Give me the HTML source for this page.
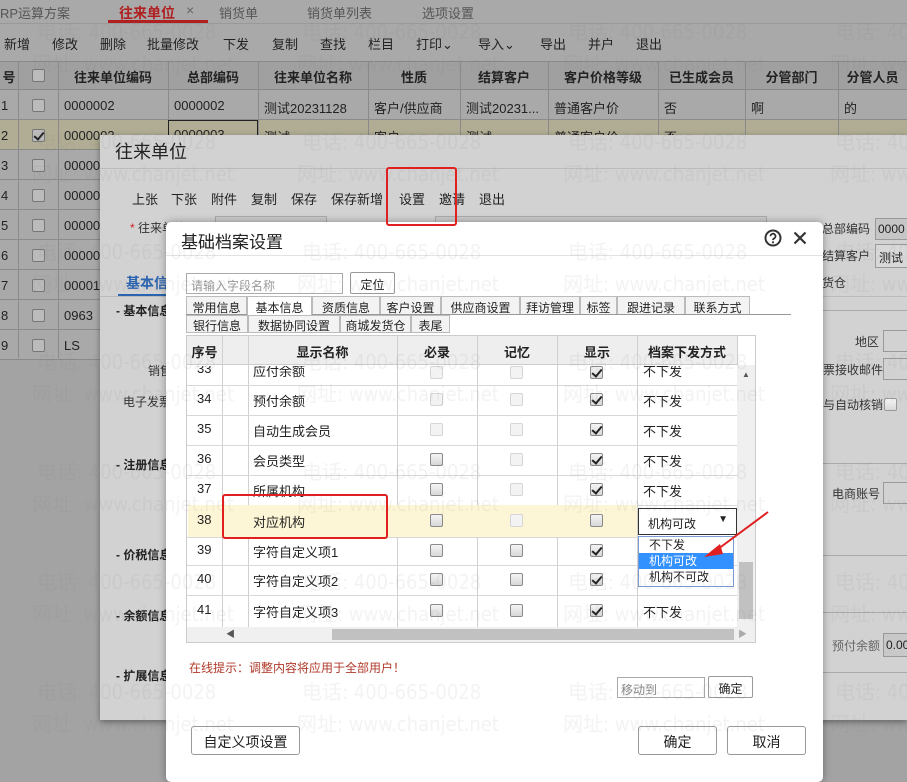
<!DOCTYPE html>
<html><head><meta charset="utf-8">
<style>
*{margin:0;padding:0;box-sizing:border-box}
body{width:907px;height:771px;overflow:hidden;position:relative;background:#a3a3a3;font-family:"Liberation Sans","Noto Sans CJK SC",sans-serif;font-size:13px;color:#222}
.a{position:absolute;white-space:nowrap}
.cb{position:absolute;width:13px;height:13px;border:1px solid #8a8a8a;border-radius:2px;background:linear-gradient(#f4f4f4,#d8d8d8)}
.cb.f{border-color:#d6d6d6;background:#f3f3f3}
.cb.k::after{content:"";position:absolute;left:3px;top:0px;width:4px;height:8px;border:solid #222;border-width:0 2px 2px 0;transform:rotate(40deg)}
.wm{position:absolute;font-size:20px;color:rgba(120,120,120,0.09);white-space:nowrap;pointer-events:none;z-index:50;font-family:"DejaVu Sans Condensed","Liberation Sans","Noto Sans CJK SC",sans-serif}
</style></head><body>

<div class="a" style="left:0;top:0;width:907px;height:360px;background:#a9a9a9"></div>
<div class="a" style="left:0;top:3px;font-size:13px;color:#555">RP运算方案</div>
<div class="a" style="left:119px;top:3px;font-size:14px;color:#b02020;font-weight:bold">往来单位</div>
<div class="a" style="left:186px;top:2px;font-size:14px;color:#666">×</div>
<div class="a" style="left:108px;top:20px;width:100px;height:3px;background:#b02020"></div>
<div class="a" style="left:219px;top:3px;color:#555">销货单</div>
<div class="a" style="left:307px;top:3px;color:#555">销货单列表</div>
<div class="a" style="left:422px;top:3px;color:#555">选项设置</div>
<div class="a" style="left:0;top:23px;width:907px;height:1px;background:#999"></div>
<div class="a" style="left:4px;top:34px">新增</div>
<div class="a" style="left:52px;top:34px">修改</div>
<div class="a" style="left:100px;top:34px">删除</div>
<div class="a" style="left:147px;top:34px">批量修改</div>
<div class="a" style="left:223px;top:34px">下发</div>
<div class="a" style="left:272px;top:34px">复制</div>
<div class="a" style="left:320px;top:34px">查找</div>
<div class="a" style="left:368px;top:34px">栏目</div>
<div class="a" style="left:416px;top:34px">打印⌄</div>
<div class="a" style="left:478px;top:34px">导入⌄</div>
<div class="a" style="left:540px;top:34px">导出</div>
<div class="a" style="left:588px;top:34px">并户</div>
<div class="a" style="left:636px;top:34px">退出</div>
<div class="a" style="left:0;top:61px;width:907px;height:29px;background:#a0a0a0;border-top:1px solid #888;border-bottom:1px solid #888"></div>
<div class="a" style="left:0;top:120px;width:907px;height:30px;background:#b1ad94"></div>
<div id="grid"></div>

<div class="a" style="left:100px;top:135px;width:807px;height:585px;background:#d2d2d2;box-shadow:0 2px 6px rgba(0,0,0,.4)"></div>
<div class="a" style="left:115px;top:138px;font-size:18px;color:#222">往来单位</div>
<div class="a" style="left:100px;top:168px;width:807px;height:1px;background:#bbb"></div>
<div class="a" style="left:132px;top:189px">上张</div>
<div class="a" style="left:171px;top:189px">下张</div>
<div class="a" style="left:211px;top:189px">附件</div>
<div class="a" style="left:251px;top:189px">复制</div>
<div class="a" style="left:291px;top:189px">保存</div>
<div class="a" style="left:331px;top:189px">保存新增</div>
<div class="a" style="left:399px;top:189px">设置</div>
<div class="a" style="left:439px;top:189px">邀请</div>
<div class="a" style="left:479px;top:189px">退出</div>
<div class="a" style="left:386px;top:167px;width:71px;height:59px;border:2px solid #e02020;border-radius:3px;z-index:60"></div>
<div class="a" style="left:130px;top:219px;font-size:12px;color:#333"><span style="color:#c22">*</span> 往来单位编码</div>
<div class="a" style="left:215px;top:216px;width:112px;height:20px;border:1px solid #aaa;background:#ccc"></div>
<div class="a" style="left:435px;top:216px;width:332px;height:20px;border:1px solid #aaa;background:#ccc"></div>
<div class="a" style="left:822px;top:220px;font-size:12px;color:#333">总部编码</div>
<div class="a" style="left:875px;top:218px;width:40px;height:22px;border:1px solid #999;background:#c6c6c6;padding:3px 2px;font-size:12px">0000</div>
<div class="a" style="left:822px;top:247px;font-size:12px;color:#333">结算客户</div>
<div class="a" style="left:875px;top:244px;width:40px;height:24px;border:1px solid #999;background:#d8d8d8;padding:4px 3px;font-size:12px">测试</div>
<div class="a" style="left:822px;top:274px;font-size:12px;color:#333">货仓</div>
<div class="a" style="left:126px;top:273px;font-size:14px;color:#2a63b0;font-weight:bold">基本信息</div>
<div class="a" style="left:118px;top:294px;width:60px;height:3px;background:#2a63b0"></div>
<div class="a" style="left:100px;top:296px;width:807px;height:1px;background:#bbb"></div>
<div class="a" style="left:116px;top:302px;font-size:12px;font-weight:bold">- 基本信息</div>
<div class="a" style="left:148px;top:362px;font-size:12px;color:#333">销售</div>
<div class="a" style="left:123px;top:393px;font-size:12px;color:#333">电子发票</div>
<div class="a" style="left:116px;top:456px;font-size:12px;font-weight:bold">- 注册信息</div>
<div class="a" style="left:116px;top:546px;font-size:12px;font-weight:bold">- 价税信息</div>
<div class="a" style="left:116px;top:607px;font-size:12px;font-weight:bold">- 余额信息</div>
<div class="a" style="left:116px;top:667px;font-size:12px;font-weight:bold">- 扩展信息</div>
<div class="a" style="left:823px;top:310px;width:84px;height:1px;background:#aaa"></div>
<div class="a" style="left:855px;top:333px;font-size:12px;color:#333">地区</div>
<div class="a" style="left:883px;top:330px;width:30px;height:22px;border:1px solid #999"></div>
<div class="a" style="left:823px;top:361px;font-size:12px;color:#333">票接收邮件</div>
<div class="a" style="left:883px;top:358px;width:30px;height:22px;border:1px solid #999"></div>
<div class="a" style="left:823px;top:396px;font-size:12px;color:#333">与自动核销</div>
<div class="cb" style="left:884px;top:398px;border-color:#999"></div>
<div class="a" style="left:823px;top:463px;width:84px;height:1px;background:#aaa"></div>
<div class="a" style="left:832px;top:485px;font-size:12px;color:#333">电商账号</div>
<div class="a" style="left:883px;top:482px;width:30px;height:22px;border:1px solid #999"></div>
<div class="a" style="left:823px;top:555px;width:84px;height:1px;background:#aaa"></div>
<div class="a" style="left:823px;top:612px;width:84px;height:1px;background:#aaa"></div>
<div class="a" style="left:832px;top:637px;font-size:12px;color:#666">预付余额</div>
<div class="a" style="left:883px;top:633px;width:30px;height:24px;border:1px solid #999;background:#c8c8c8;padding:4px 2px;font-size:12px">0.00</div>
<div class="a" style="left:823px;top:672px;width:84px;height:1px;background:#aaa"></div>

<div class="a" style="left:166px;top:222px;width:657px;height:560px;background:#fff;border-radius:5px;box-shadow:0 0 8px rgba(0,0,0,.35)"></div>
<div class="a" style="left:181px;top:228px;font-size:17px;color:#222">基础档案设置</div>
<svg class="a" style="left:764px;top:229px" width="18" height="18" viewBox="0 0 18 18"><circle cx="9" cy="9" r="7.5" fill="none" stroke="#333" stroke-width="2"/><path d="M6.5 7.2a2.5 2.5 0 1 1 3.5 2.3c-.8.4-1 .8-1 1.6" fill="none" stroke="#333" stroke-width="1.8"/><circle cx="9" cy="13.3" r="1.1" fill="#333"/></svg>
<svg class="a" style="left:793px;top:231px" width="14" height="14" viewBox="0 0 14 14"><path d="M1.5 1.5L12.5 12.5M12.5 1.5L1.5 12.5" stroke="#333" stroke-width="2.2"/></svg>
<div class="a" style="left:166px;top:255px;width:657px;height:1px;background:#e2e2e2"></div>
<div class="a" style="left:186px;top:273px;width:157px;height:21px;border:1px solid #aaa;font-size:12px;color:#999;padding:3px 4px">请输入字段名称</div>
<div class="a" style="left:350px;top:272px;width:45px;height:22px;border:1px solid #999;border-radius:2px;font-size:12px;padding:3px 0;text-align:center">定位</div>
<div id="tabs"></div>
<div class="a" style="left:186px;top:314px;width:605px;height:1px;background:#999"></div>

<div class="a" style="left:186px;top:335px;width:570px;height:308px;border:1px solid #ccc;background:#fff"></div>
<div class="a" style="left:187px;top:336px;width:550px;height:29px;background:#eee;border-bottom:1px solid #ccc"></div>
<div id="ig"></div>
<div class="a" style="left:737px;top:365px;width:18px;height:262px;background:#f0f0f0"></div>
<div class="a" style="left:742px;top:370px;font-size:8px;color:#555">▲</div>
<div class="a" style="left:742px;top:612px;font-size:8px;color:#aaa">▼</div>
<div class="a" style="left:739px;top:562px;width:14px;height:57px;background:#c1c1c1"></div>
<div class="a" style="left:187px;top:627px;width:568px;height:15px;background:#f0f0f0"></div>
<div class="a" style="left:332px;top:629px;width:402px;height:11px;background:#c1c1c1"></div>
<div class="a" style="left:226px;top:627px;font-size:9px;color:#555">◀</div>
<div class="a" style="left:738px;top:627px;font-size:9px;color:#aaa">▶</div>

<div class="a" style="left:222px;top:494px;width:166px;height:45px;border:2px solid #e02020;border-radius:3px;z-index:60"></div>
<div class="a" style="left:638px;top:508px;width:99px;height:27px;border:1px solid #333;background:#fff;font-size:12px;padding:6px 9px;z-index:40">机构可改<span style="position:absolute;right:8px;top:5px;font-size:10px">▼</span></div>
<div class="a" style="left:638px;top:536px;width:96px;height:51px;border:1px solid #7a9cd3;background:#fff;font-size:12px;z-index:40">
<div style="height:16px;padding:0 10px;line-height:16px">不下发</div>
<div style="height:16px;padding:0 10px;line-height:16px;background:#3390ff;color:#fff">机构可改</div>
<div style="height:16px;padding:0 10px;line-height:16px">机构不可改</div></div>
<svg class="a" style="left:700px;top:508px;z-index:61" width="72" height="56" viewBox="0 0 72 56"><path d="M68 4L14 44" stroke="#e02020" stroke-width="2"/><path d="M4 49L20 36L23 46Z" fill="#e02020"/></svg>

<div class="a" style="left:189px;top:659px;font-size:12px;color:#b03a2a">在线提示：调整内容将应用于全部用户！</div>
<div class="a" style="left:617px;top:677px;width:88px;height:21px;border:1px solid #aaa;font-size:12px;color:#888;padding:3px 3px">移动到</div>
<div class="a" style="left:708px;top:676px;width:45px;height:22px;border:1px solid #999;border-radius:2px;font-size:12px;text-align:center;padding:3px 0">确定</div>
<div class="a" style="left:191px;top:726px;width:109px;height:29px;border:1px solid #999;border-radius:3px;font-size:14px;text-align:center;padding:5px 0">自定义项设置</div>
<div class="a" style="left:638px;top:726px;width:79px;height:29px;border:1px solid #999;border-radius:3px;font-size:14px;text-align:center;padding:5px 0">确定</div>
<div class="a" style="left:727px;top:726px;width:79px;height:29px;border:1px solid #999;border-radius:3px;font-size:14px;text-align:center;padding:5px 0">取消</div>

<div id="wm"></div>
<script>
var cols=[0,18,58,168,258,368,460,548,658,745,838,907];
var hd=["号","","往来单位编码","总部编码","往来单位名称","性质","结算客户","客户价格等级","已生成会员","分管部门","分管人员"];
var g='';
for(var i=1;i<cols.length-1;i++)g+='<div class="a" style="left:'+cols[i]+'px;top:61px;width:1px;height:'+(i<3?297:74)+'px;background:#8a8a8a"></div>';
for(i=0;i<hd.length;i++)g+='<div class="a" style="left:'+cols[i]+'px;top:67px;width:'+(cols[i+1]-cols[i])+'px;text-align:center;font-weight:bold;font-size:13px">'+hd[i]+'</div>';
g+='<div class="cb" style="left:32px;top:69px;border-color:#777;background:#bbb"></div>';
var codes=["0000002","0000003","00000","00000","00000","00000","00001","0963","LS"];
for(var r=0;r<9;r++){var y=90+r*30;
g+='<div class="a" style="left:0;top:'+(y+29)+'px;width:'+(r<2?907:100)+'px;height:1px;background:#8a8a8a"></div>';
g+='<div class="a" style="left:1px;top:'+(y+8)+'px">'+(r+1)+'</div>';
g+='<div class="cb'+(r==1?' k':'')+'" style="left:32px;top:'+(y+9)+'px;border-color:#777;background:#bbb"></div>';
g+='<div class="a" style="left:64px;top:'+(y+8)+'px">'+codes[r]+'</div>';}
var r1=["0000002","测试20231128","客户/供应商","测试20231...","普通客户价","否","啊","的"];
var xs=[174,264,374,466,554,664,751,844];
for(i=0;i<8;i++)g+='<div class="a" style="left:'+xs[i]+'px;top:98px">'+r1[i]+'</div>';
var r2=["0000003","测试","客户","测试","普通客户价","否"];
for(i=0;i<6;i++)g+='<div class="a" style="left:'+xs[i]+'px;top:127px">'+r2[i]+'</div>';
g+='<div class="a" style="left:168px;top:120px;width:90px;height:30px;border:1px solid #222"></div>';
document.getElementById('grid').innerHTML=g;
var t1=[["常用信息",186,247],["基本信息",247,312],["资质信息",312,380],["客户设置",380,441],["供应商设置",441,520],["拜访管理",520,580],["标签",580,617],["跟进记录",617,685],["联系方式",685,750]];
var t2=[["银行信息",186,248],["数据协同设置",248,340],["商城发货仓",340,411],["表尾",411,450]];
var t='';
t1.forEach(function(a){t+='<div class="a" style="left:'+a[1]+'px;top:296px;width:'+(a[2]-a[1])+'px;height:'+(a[0]=="基本信息"?19:18)+'px;border:1px solid #bbb;border-bottom:none;background:'+(a[0]=="基本信息"?'#fff':'#f3f3f3')+';font-size:12px;text-align:center;padding-top:2px;z-index:2">'+a[0]+'</div>'});
t2.forEach(function(a){t+='<div class="a" style="left:'+a[1]+'px;top:315px;width:'+(a[2]-a[1])+'px;height:18px;border:1px solid #bbb;background:#f3f3f3;font-size:12px;text-align:center;padding-top:1px">'+a[0]+'</div>'});
document.getElementById('tabs').innerHTML=t;
var c=[187,222,248,397,477,557,637,737];
var H=["序号","","显示名称","必录","记忆","显示","档案下发方式"];
var s='';
for(i=0;i<7;i++)s+='<div class="a" style="left:'+c[i]+'px;top:342px;width:'+(c[i+1]-c[i])+'px;text-align:center;font-weight:bold;font-size:13px">'+H[i]+'</div>';
for(i=1;i<8;i++)s+='<div class="a" style="left:'+c[i]+'px;top:336px;width:1px;height:291px;background:#d0d0d0"></div>';
var rows=[[33,"应付余额",1,1,1],[34,"预付余额",1,1,1],[35,"自动生成会员",1,1,1],[36,"会员类型",0,1,1],[37,"所属机构",0,1,1],[38,"对应机构",0,1,0],[39,"字符自定义项1",0,0,1],[40,"字符自定义项2",0,0,1],[41,"字符自定义项3",0,0,1]];
var top0=[355,385,415,445,475,505,537,565,595];var ht=[30,30,30,30,30,32,28,30,32];
rows.forEach(function(r,k){var y=top0[k],hh=ht[k];
if(r[0]==38)s+='<div class="a" style="left:188px;top:'+y+'px;width:449px;height:'+hh+'px;background:#fdf6d6"></div>';
if(k<8)s+='<div class="a" style="left:187px;top:'+(y+hh)+'px;width:550px;height:1px;background:#d8d8d8"></div>';
var ty=y+hh/2-9;var clip=ty<364?'clip-path:inset('+(366-ty)+'px 0 0 0);':'';
s+='<div class="a" style="left:197px;top:'+ty+'px;'+clip+'">'+r[0]+'</div>';
s+='<div class="a" style="left:253px;top:'+ty+'px;'+clip+'">'+r[1]+'</div>';
var cy=y+hh/2-7;if(cy<366)cy=366;
s+='<div class="cb'+(r[2]?' f':'')+'" style="left:430px;top:'+cy+'px"></div>';
s+='<div class="cb'+(r[3]?' f':'')+'" style="left:510px;top:'+cy+'px"></div>';
s+='<div class="cb'+(r[4]?' k':'')+'" style="left:590px;top:'+cy+'px"></div>';
if(r[0]!=38&&r[0]!=39&&r[0]!=40)s+='<div class="a" style="left:643px;top:'+ty+'px;'+clip+'">不下发</div>';
});
document.getElementById('ig').innerHTML=s;
var w='';var xsw=[47,312,578,845];
for(var ry=0;ry<7;ry++)for(i=0;i<4;i++){var y2=28+ry*110;
w+='<div class="wm" style="left:'+(xsw[i]-10)+'px;top:'+(y2-12)+'px">电话: 400-665-0028</div>';
w+='<div class="wm" style="left:'+(xsw[i]-15)+'px;top:'+(y2+20)+'px">网址: www.chanjet.net</div>';}
document.getElementById('wm').innerHTML=w;
</script>
</body></html>
